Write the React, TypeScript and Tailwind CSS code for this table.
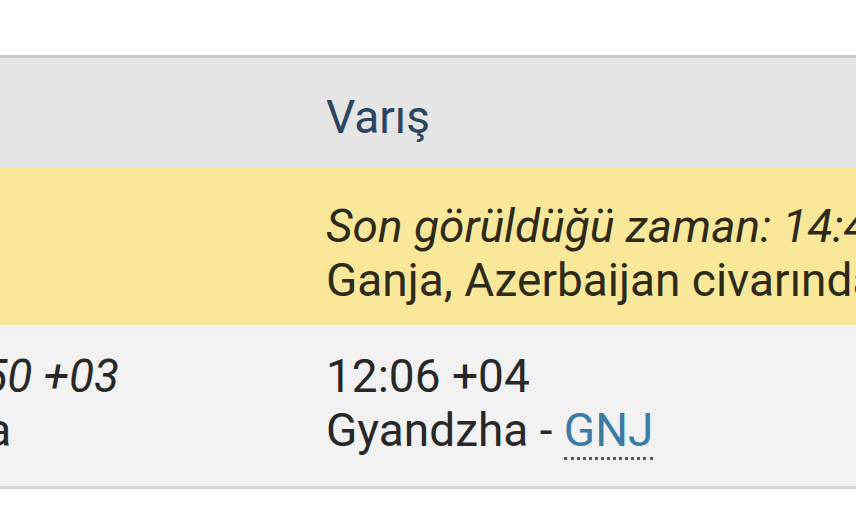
export default function App() {
  return (
    <div className="w-[856px] h-[511px] bg-white overflow-hidden font-['Roboto',sans-serif] text-[46px] leading-[54px] text-[#282828]">
      <div className="h-[55px]" />
      <div className="border-t-[3px] border-b-[3px] border-[#c9cbcb] border-b-[#d4d4d4]">
        {/* header */}
        <div className="flex h-[110px] items-center bg-[#e5e5e5]">
          <div className="w-[326px] shrink-0" />
          <div className="text-[#2b4660] pt-[8px]">Varış</div>
        </div>

        {/* last seen */}
        <div className="flex h-[157px] bg-[#fae89a] pt-[31px]">
          <div className="w-[326px] shrink-0" />
          <div className="whitespace-nowrap text-[#2e2a18]">
            <div className="italic">Son görüldüğü zaman: 14:41 +04</div>
            <div>Ganja, Azerbaijan civarında</div>
          </div>
        </div>

        {/* times */}
        <div className="flex h-[161px] bg-[#f2f2f2] pt-[24px]">
          <div className="w-[326px] shrink-0 overflow-hidden">
            <div className="-ml-[79px] whitespace-nowrap">
              <div className="italic">10:50 +03</div>
              <div>Riga</div>
            </div>
          </div>
          <div className="whitespace-nowrap">
            <div>12:06 +04</div>
            <div>
              Gyandzha -{" "}
              <a className="text-[#3b7ca6] no-underline border-b-[3px] border-dotted border-[#4a5a6a]">GNJ</a>
            </div>
          </div>
        </div>
      </div>
    </div>
  );
}
